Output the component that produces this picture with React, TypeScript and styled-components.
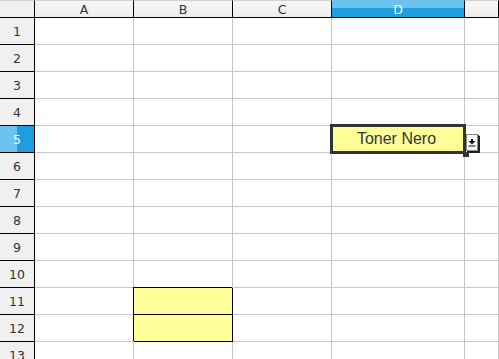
import React from 'react';
import styled, { createGlobalStyle, css } from 'styled-components';

const COLUMNS = ['A', 'B', 'C', 'D', ''];
const ROWS = Array.from({ length: 13 }, (_, i) => i + 1);

const GlobalStyle = createGlobalStyle`
  html, body {
    margin: 0;
    padding: 0;
    background: #fff;
    overflow: hidden;
  }
`;

const Sheet = styled.div`
  display: grid;
  grid-template-columns: 35px 99px 99px 99px 133px 1fr;
  grid-template-rows: 18px;
  grid-auto-rows: 27px;
  width: 499px;
  height: 359px;
  overflow: hidden;
  font-family: 'DejaVu Sans', 'Liberation Sans', sans-serif;
`;

const headerBase = css`
  box-sizing: border-box;
  display: flex;
  align-items: center;
  justify-content: center;
  font-size: 12.5px;
  color: #333;
`;

const Corner = styled.div`
  ${headerBase};
  background: #f0f0f0;
  border-top: 1px solid #d0d0d0;
  border-right: 1px solid #000;
  border-bottom: 1px solid #000;
`;

const ColHeader = styled.div<{ $selected?: boolean }>`
  ${headerBase};
  border-top: 1px solid #d0d0d0;
  border-right: 1px solid #000;
  border-bottom: 1px solid #000;
  background: linear-gradient(#f7f7f7, #ececec);
  ${(p) =>
    p.$selected &&
    css`
      background: linear-gradient(to bottom, #6cc3ef 45%, #1e9ddf 45%);
      color: #fff;
      border-top-color: #6cc3ef;
    `}
`;

const RowHeader = styled.div<{ $selected?: boolean }>`
  ${headerBase};
  background: #f0f0f0;
  border-right: 1px solid #000;
  border-bottom: 1px solid #000;
  ${(p) =>
    p.$selected &&
    css`
      background: linear-gradient(to right, #6cc3ef 50%, #1e9ddf 50%);
      color: #fff;
    `}
`;

const Cell = styled.div<{ $fill?: boolean; $boxed?: boolean }>`
  box-sizing: border-box;
  position: relative;
  display: flex;
  align-items: center;
  justify-content: center;
  border-right: 1px solid #c6c6c6;
  border-bottom: 1px solid #c6c6c6;
  background: ${(p) => (p.$fill ? '#ffff99' : '#fff')};
  font-family: 'Liberation Sans', Arial, sans-serif;
  font-size: 16px;
  color: #333;
  ${(p) =>
    p.$boxed &&
    css`
      border-right-color: #000;
      border-bottom-color: #000;
      box-shadow: -1px -1px 0 #000;
    `}
`;

const Cursor = styled.div`
  position: absolute;
  left: -2px;
  top: -2px;
  right: -2px;
  bottom: -2px;
  box-sizing: border-box;
  border: 3px solid #333;
  z-index: 2;
`;

const Handle = styled.div`
  position: absolute;
  left: 131px;
  top: 26px;
  width: 6px;
  height: 5px;
  background: #333;
  z-index: 3;
`;

const DropButton = styled.div`
  position: absolute;
  left: 134px;
  top: 8px;
  width: 12px;
  height: 17px;
  box-sizing: border-box;
  background: #fafafa;
  border: 1px solid #8a8a8a;
  box-shadow: 1px 1px 0 #222, 2px 2px 0 #222;
  display: flex;
  align-items: center;
  justify-content: center;
  z-index: 4;
`;

const CellText = styled.span`
  position: relative;
  z-index: 1;
  margin-left: -3px;
`;

const DropIcon = () => (
  <svg width="10" height="15" viewBox="0 0 10 15">
    <rect x="4" y="4" width="2" height="2" fill="#111" />
    <polygon points="1.5,6 8.5,6 5,9.5" fill="#111" />
    <rect x="1.5" y="10.5" width="7" height="1" fill="#111" />
  </svg>
);

const App: React.FC = () => {
  const isFilled = (col: string, row: number) => (col === 'B' && (row === 11 || row === 12)) || (col === 'D' && row === 5);

  return (
    <>
      <GlobalStyle />
      <Sheet>
        <Corner />
        {COLUMNS.map((c, i) => (
          <ColHeader key={i} $selected={c === 'D'}>
            {c}
          </ColHeader>
        ))}
        {ROWS.map((r) => (
          <React.Fragment key={r}>
            <RowHeader $selected={r === 5}>{r}</RowHeader>
            {COLUMNS.map((c, i) => {
              const active = c === 'D' && r === 5;
              return (
                <Cell key={i} $fill={isFilled(c, r)} $boxed={c === 'B' && (r === 11 || r === 12)}>
                  {active && (
                    <>
                      <CellText>Toner Nero</CellText>
                      <Cursor />
                      <Handle />
                      <DropButton>
                        <DropIcon />
                      </DropButton>
                    </>
                  )}
                </Cell>
              );
            })}
          </React.Fragment>
        ))}
      </Sheet>
    </>
  );
};

export default App;
